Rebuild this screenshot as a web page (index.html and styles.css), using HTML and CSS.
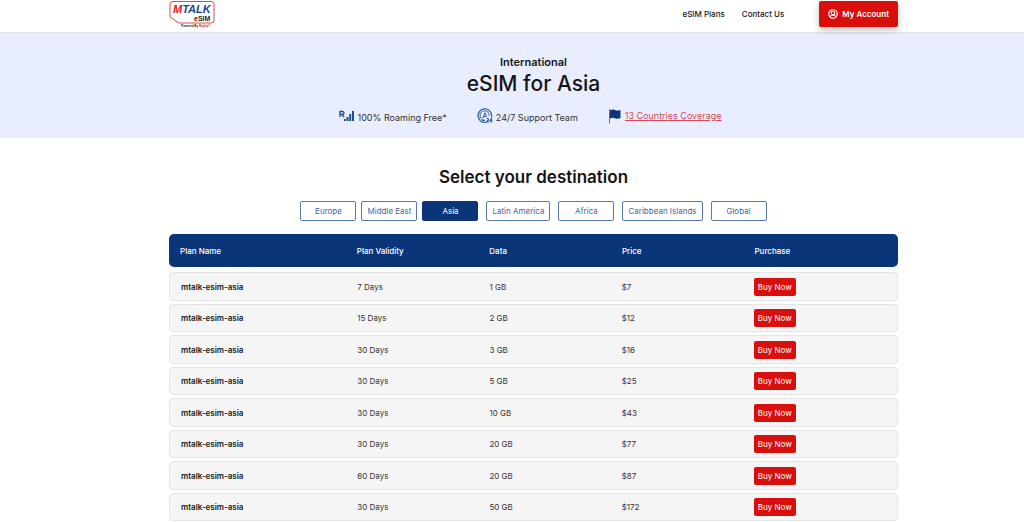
FILE: index.html
```
<!DOCTYPE html>
<html lang="en">
<head>
<meta charset="utf-8">
<meta name="viewport" content="width=device-width, initial-scale=1">
<title>eSIM for Asia</title>
<link rel="stylesheet" href="styles.css">
</head>
<body>
<header class="site-header">
  <a class="logo" href="#" aria-label="MTALK eSIM">
    <svg width="46" height="28" viewBox="0 0 46 28">
      <path d="M1 17V4Q1 1.500 4 1.500H42Q45 1.500 45 4.500V20Q45 23 42 23H10Z" fill="#fff" stroke="#d94a4a"/>
      <text class="logo-name" x="4" y="13"><tspan fill="#e01b1b">M</tspan><tspan fill="#15458f">TALK</tspan></text>
      <text class="logo-sub" x="25" y="20.500">eSIM</text>
      <text class="logo-tag" x="12" y="27">Powered By <tspan fill="#e01b1b">Mobily7</tspan></text>
    </svg>
  </a>
  <nav class="site-nav">
    <a href="#">eSIM Plans</a>
    <a href="#">Contact Us</a>
    <a class="account" href="#">
      <svg width="10" height="10" viewBox="0 0 20 20" fill="none" stroke="#fff" stroke-width="2.400"><circle cx="10" cy="10" r="8.500"/><circle cx="10" cy="8" r="3.500"/><path d="M4 16Q5 12.500 10 12.500T16 16"/></svg>
      My Account
    </a>
  </nav>
</header>

<main>
  <section class="hero">
    <p class="hero-kicker">International</p>
    <h1>eSIM for Asia</h1>
    <ul class="features">
      <li>
        <svg width="16" height="12" viewBox="0 0 16 12" fill="#1b4a91"><path d="M1 7V1.500H3.500Q5 1.500 5 3T3.500 4.500H1M3 4.500L5 7" fill="none" stroke="#1b4a91" stroke-width="1.300"/><path d="M5 9h1.800v2H5zM7.500 7h2v4h-2zM10.200 4h2v7h-2zM13 1h2v10h-2z"/></svg>
        <span>100% Roaming Free*</span>
      </li>
      <li>
        <svg width="16" height="16" viewBox="0 0 16 16" fill="none" stroke="#3762a3"><path d="M9 14.300A6.800 6.800 0 1 1 14.500 9" stroke-width="1.300"/><path d="M7 12A4.600 4.600 0 1 1 12.200 8"/><path d="M6 10L8 4.800L9.500 8.500M6.500 8.500H9.500M5 12.500H8"/><path d="M9.500 10.500h1.800v1.500l-1.800 2H12M14.500 14.500V10.500L12.800 13H15.500" stroke-width="1.200"/></svg>
        <span>24/7 Support Team</span>
      </li>
      <li class="coverage">
        <svg width="13" height="16" viewBox="0 0 13 16"><path d="M1.500 1V15.500" stroke="#5374a9"/><path d="M2 2.500Q4.500 1 7 2T12.500 2V10Q9.500 11.300 7 10.200T2 10.500Z" fill="#0a3679"/></svg>
        <a href="#">13 Countries Coverage</a>
      </li>
    </ul>
  </section>

  <section class="plans">
    <h2>Select your destination</h2>
    <div class="regions">
      <button type="button">Europe</button>
      <button type="button">Middle East</button>
      <button type="button" class="active">Asia</button>
      <button type="button" class="spaced">Latin America</button>
      <button type="button" class="spaced">Africa</button>
      <button type="button" class="spaced">Caribbean Islands</button>
      <button type="button" class="spaced">Global</button>
    </div>
    <table class="plan-table">
      <thead>
        <tr><th scope="col">Plan Name</th><th scope="col">Plan Validity</th><th scope="col">Data</th><th scope="col">Price</th><th scope="col">Purchase</th></tr>
      </thead>
      <tbody>
        <tr><th scope="row">mtalk-esim-asia</th><td>7 Days</td><td>1 GB</td><td>$7</td><td><button type="button">Buy Now</button></td></tr>
        <tr><th scope="row">mtalk-esim-asia</th><td>15 Days</td><td>2 GB</td><td>$12</td><td><button type="button">Buy Now</button></td></tr>
        <tr><th scope="row">mtalk-esim-asia</th><td>30 Days</td><td>3 GB</td><td>$16</td><td><button type="button">Buy Now</button></td></tr>
        <tr><th scope="row">mtalk-esim-asia</th><td>30 Days</td><td>5 GB</td><td>$25</td><td><button type="button">Buy Now</button></td></tr>
        <tr><th scope="row">mtalk-esim-asia</th><td>30 Days</td><td>10 GB</td><td>$43</td><td><button type="button">Buy Now</button></td></tr>
        <tr><th scope="row">mtalk-esim-asia</th><td>30 Days</td><td>20 GB</td><td>$77</td><td><button type="button">Buy Now</button></td></tr>
        <tr><th scope="row">mtalk-esim-asia</th><td>60 Days</td><td>20 GB</td><td>$87</td><td><button type="button">Buy Now</button></td></tr>
        <tr><th scope="row">mtalk-esim-asia</th><td>30 Days</td><td>50 GB</td><td>$172</td><td><button type="button">Buy Now</button></td></tr>
      </tbody>
    </table>
  </section>
</main>
</body>
</html>
```
FILE: styles.css
```
* { box-sizing: border-box; }

body {
  margin: 0;
  background: #fff;
  color: #151515;
  font-family: Inter, "Liberation Sans", sans-serif;
  font-size: 8px;
  line-height: 12px;
}

h1, h2, p, ul { margin: 0; padding: 0; }

button { font: inherit; cursor: pointer; }

.site-header,
.hero,
.plans { padding: 0 126px 0 169px; }

.site-header {
  display: flex;
  justify-content: space-between;
  align-items: flex-start;
  height: 33px;
  border-bottom: 1px solid #e2e4e9;
}

.logo svg { display: block; }
.logo-name { font: italic bold 11px "Liberation Sans", sans-serif; }
.logo-sub { font: bold 7px "Liberation Sans", sans-serif; fill: #222; }
.logo-tag { font: bold 3px "Liberation Sans", sans-serif; fill: #222; }

.site-nav {
  display: flex;
  align-items: center;
  gap: 17px;
  padding-top: 1px;
  font-size: 8px;
  font-weight: 500;
}

.site-nav a { color: #151515; text-decoration: none; }

.site-nav .account {
  display: flex;
  align-items: center;
  gap: 4px;
  height: 26px;
  margin-left: 18px;
  padding: 0 9px;
  border-radius: 2px;
  background: #d90f0c;
  box-shadow: 0 3px 7px rgba(0, 0, 0, .25);
  color: #fff;
  font-weight: 600;
}

.hero {
  padding-top: 22px;
  padding-bottom: 13px;
  background: #e8eeff;
  text-align: center;
}

.hero-kicker { font-size: 11px; font-weight: 600; line-height: 14px; }

.hero h1 { font-size: 21px; font-weight: 500; line-height: 30px; }

.features {
  display: flex;
  justify-content: center;
  gap: 30px;
  margin-top: 7px;
  padding-right: 7px;
  list-style: none;
  color: #333;
  font-size: 9px;
}

.features li { display: flex; align-items: center; gap: 3px; height: 19px; }
.features li span { padding-top: 4px; }
.features .coverage { gap: 4px; }
.features a { color: #d9485a; }

.plans { padding-top: 26px; padding-bottom: 1px; }

.plans h2 {
  font-size: 17px;
  font-weight: 600;
  line-height: 26px;
  text-align: center;
}

.regions {
  display: flex;
  justify-content: center;
  gap: 5px;
  margin: 11px 0 13px;
}

.regions button {
  min-width: 56px;
  height: 20px;
  padding: 0 5px;
  border: 1px solid #5779b1;
  border-radius: 2px;
  background: #fff;
  color: #3f64a0;
}

.regions .active { border-color: #0a3679; background: #0a3679; color: #fff; }
.regions .spaced { margin-left: 3px; }

.plan-table { display: grid; gap: 5px; }
.plan-table tbody { display: grid; gap: 3px; }

.plan-table tr {
  display: grid;
  grid-template-columns: 4fr 3fr 3fr 3fr 3fr;
  align-items: center;
  padding: 0 11px;
}

.plan-table th, .plan-table td { padding: 0; text-align: left; }

.plan-table thead tr {
  min-height: 33px;
  border-radius: 5px;
  background: #0a3679;
  color: #fff;
}

.plan-table thead th { font-weight: 500; }

.plan-table tbody tr {
  min-height: 28px;
  border: 1px solid #e5e5e5;
  border-radius: 4px;
  background: #f5f5f5;
}

.plan-table tbody tr:nth-child(odd) { min-height: 29px; }
.plan-table tbody th { font-weight: 600; }
.plan-table td { color: #333; }

.plan-table button {
  display: block;
  height: 18px;
  padding: 0 4px;
  border: 0;
  border-radius: 2px;
  background: #d90f0c;
  color: #fff;
}
```
